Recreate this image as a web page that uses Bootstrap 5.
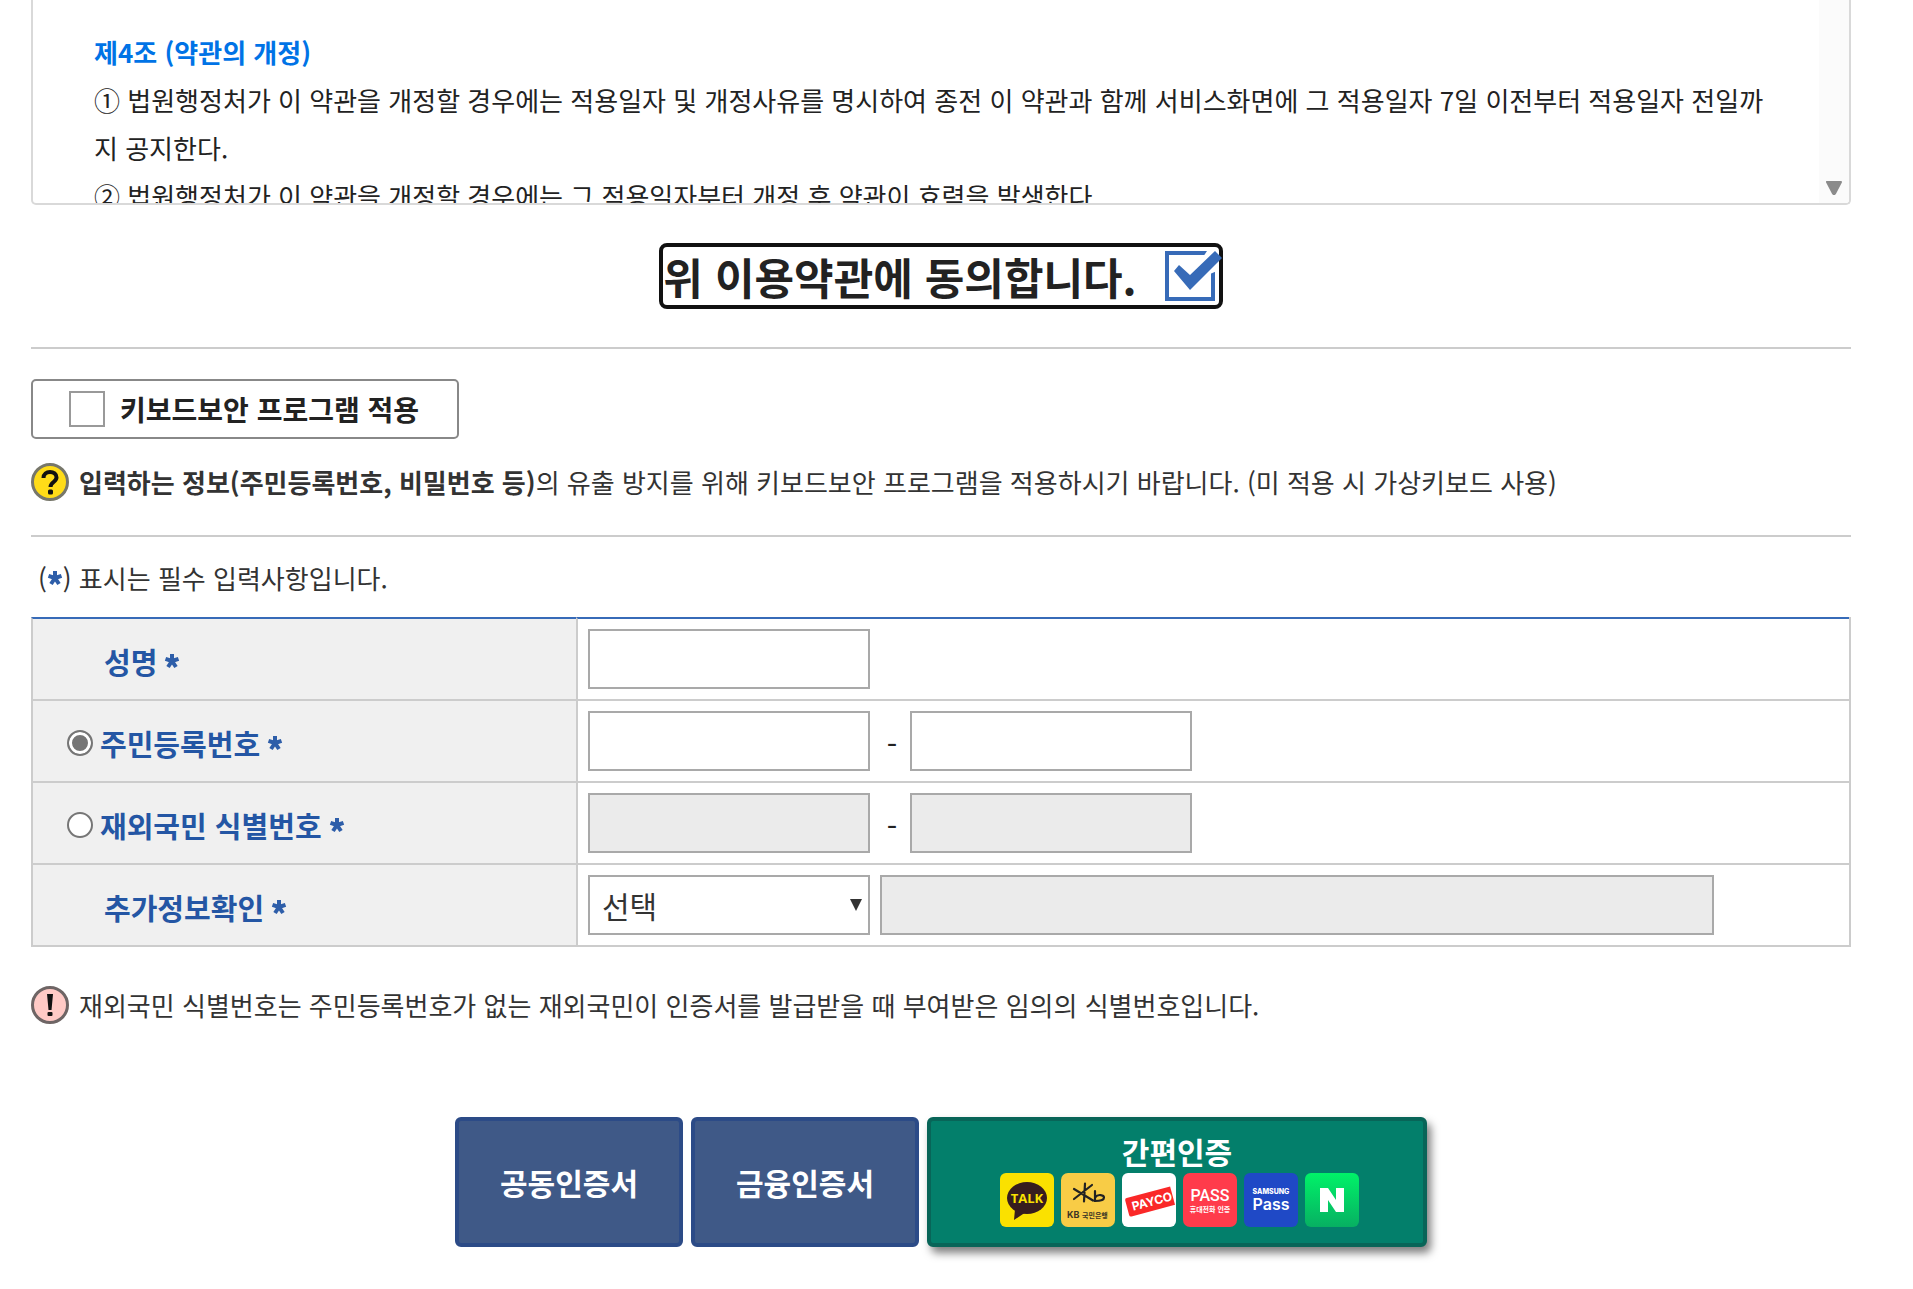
<!DOCTYPE html>
<html lang="ko">
<head>
<meta charset="utf-8">
<meta name="viewport" content="width=device-width, initial-scale=1">
<title>이용약관 동의 및 본인확인</title>
<link href="https://cdn.jsdelivr.net/npm/bootstrap@5.3.0/dist/css/bootstrap.min.css" rel="stylesheet">
<style>
body{font-family:"Noto Sans CJK KR","Noto Sans",sans-serif;font-size:26px;line-height:48px;color:#222;background:#fff}
.page{padding:0 62px 36px 31px}
.terms{height:205px;border:2px solid #d9d9d9;border-top:0;border-radius:0 0 5px 5px;overflow:hidden}
.terms-text{padding:28px 38px 0 61px}
.terms-text h2{font-size:26px;line-height:48px;font-weight:700;color:#0073e6}
.terms-bar{width:30px;background:#fbfbfb;padding-bottom:8px}
.agree{border:4px solid #111;border-radius:8px;height:66px;font-size:43px;gap:28px;margin:38px 0}
.tick{position:relative;width:54px;height:50px}
.tick input{appearance:none;display:block;width:50px;height:50px;margin:0;border:4px solid #376bb8;background:#fff}
.tick svg{position:absolute;left:0;top:0;pointer-events:none}
.rule{border-top:2px solid #ccc}
.keysec{border:2px solid #888;border-radius:5px;height:60px;width:428px;padding-left:36px;gap:15px;font-size:28px;margin:30px 0 19px}
.keysec input{appearance:none;width:36px;height:36px;margin:0;border:2px solid #999;background:#fff}
.hint{gap:10px;color:#333}
.hint svg{flex:none}
.hint + .rule{margin-top:29px}
.required-note{margin:17px 0 15px;padding-left:7px;color:#333}
.star{width:16px;height:16px}
.form-grid{width:100%;border-collapse:separate;border-spacing:0;border-right:2px solid #ccc}
.form-grid th,.form-grid td{height:82px;border-bottom:2px solid #ccc;border-left:2px solid #ccc;vertical-align:middle}
.form-grid tr:first-child>*{border-top:2px solid #376bb8;height:84px}
.form-grid th{width:545px;background:#f0f0f0;color:#2456a4;font-size:29px;font-weight:700;padding:4px 0 0 34px}
.form-grid td{padding:0 10px}
.form-grid th>div{gap:7px}
.no-radio{padding-left:37px}
.form-grid input[type=radio]{appearance:none;flex:none;width:26px;height:26px;margin:0;border:2px solid #767676;border-radius:50%;background:#fff}
.form-grid input[type=radio]:checked{background:#767676;box-shadow:inset 0 0 0 3px #fff}
.field{width:282px;height:60px;border:2px solid #a9a9a9;border-radius:0;background-color:#fff;padding:0 12px;font-size:30px;line-height:normal;color:#333}
.field:disabled{background:#ebebeb;opacity:1}
.field-wide{width:834px;margin-left:10px}
.dash{width:40px;padding:4px 0 0 4px;text-align:center;font-size:30px}
.pick{position:relative}
.pick select{appearance:none}
.pick svg{position:absolute;right:8px;top:24px;pointer-events:none}
.notice{margin:34px 0 88px}
.cert{width:228px;height:130px;border-radius:6px;font-size:30px;font-weight:700;color:#fff}
.cert-blue{background:#3f5987;border:4px solid #2c4b87}
.cert-easy{width:500px;background:#037f6b;border:4px solid #086558;box-shadow:4px 6px 8px rgba(0,0,0,.5)}
.cert-easy .cert-name{line-height:44px}
.logos{gap:7px;padding-left:4px}
</style>
</head>
<body>
<svg width="0" height="0" class="position-absolute" aria-hidden="true">
  <symbol id="star" viewBox="0 0 16 16"><path d="M8 8V1M8 8 1.500 5.800M8 8l6.500-2.200M8 8l-4 6M8 8l4 6" stroke="#2e5ea9" stroke-width="4" fill="none"/></symbol>
</svg>
<main class="page">
  <section class="terms d-flex">
    <div class="terms-text flex-grow-1">
      <h2 class="mb-0">제4조 (약관의 개정)</h2>
      <p class="mb-0">① 법원행정처가 이 약관을 개정할 경우에는 적용일자 및 개정사유를 명시하여 종전 이 약관과 함께 서비스화면에 그 적용일자 7일 이전부터 적용일자 전일까지 공지한다.</p>
      <p class="mb-0">② 법원행정처가 이 약관을 개정할 경우에는 그 적용일자부터 개정 후 약관이 효력을 발생한다.</p>
    </div>
    <div class="terms-bar d-flex align-items-end justify-content-center flex-shrink-0">
      <svg width="18" height="14" viewBox="0 0 18 14"><path d="M2 1h14L10 12.500Q9 14 8 12.500Z" fill="#8b8b8b" stroke="#8b8b8b" stroke-width="2" stroke-linejoin="round"/></svg>
    </div>
  </section>

  <div class="d-flex justify-content-center">
    <label class="agree d-inline-flex align-items-center fw-bold" for="agree">위 이용약관에 동의합니다.
      <span class="tick"><input type="checkbox" id="agree" checked>
        <svg width="58" height="50" viewBox="0 0 58 50"><path d="M42 0h10v20l-7 3-9-14z" fill="#fff"/><path d="M9 20l5-6 11 10L50 0l7 7L25 39Z" fill="#376bb8"/></svg>
      </span>
    </label>
  </div>

  <div class="rule"></div>
  <label class="keysec d-flex align-items-center fw-bold" for="keysec"><input type="checkbox" id="keysec">키보드보안 프로그램 적용</label>
  <div class="hint d-flex align-items-center">
    <svg width="38" height="38" viewBox="0 0 38 38"><circle cx="19" cy="19" r="17.500" fill="#ffdc18" stroke="#77776a" stroke-width="3"/><path d="M12.500 15c0-4 3-6 6.500-6s6.500 2 6.500 5.500c0 4.500-6 4.500-6 9.500" fill="none" stroke="#111" stroke-width="4"/><rect x="17" y="26.500" width="5" height="5" rx="1.500" fill="#111"/></svg>
    <span><b>입력하는 정보(주민등록번호, 비밀번호 등)</b>의 유출 방지를 위해 키보드보안 프로그램을 적용하시기 바랍니다. (미 적용 시 가상키보드 사용)</span>
  </div>
  <div class="rule"></div>

  <div class="required-note d-flex align-items-center">(<svg class="star"><use href="#star"/></svg>)&nbsp;표시는 필수 입력사항입니다.</div>

  <table class="form-grid">
    <tr>
      <th scope="row"><div class="d-flex align-items-center no-radio"><label for="nm">성명</label><svg class="star"><use href="#star"/></svg></div></th>
      <td><input class="field d-block" type="text" id="nm"></td>
    </tr>
    <tr>
      <th scope="row"><div class="d-flex align-items-center"><input type="radio" name="idkind" id="rrn" checked><label for="rrn">주민등록번호</label><svg class="star"><use href="#star"/></svg></div></th>
      <td><div class="d-flex align-items-center"><input class="field" type="text" aria-label="주민등록번호 앞자리"><span class="dash">-</span><input class="field" type="text" aria-label="주민등록번호 뒷자리"></div></td>
    </tr>
    <tr>
      <th scope="row"><div class="d-flex align-items-center"><input type="radio" name="idkind" id="orn"><label for="orn">재외국민 식별번호</label><svg class="star"><use href="#star"/></svg></div></th>
      <td><div class="d-flex align-items-center"><input class="field" type="text" disabled aria-label="식별번호 앞자리"><span class="dash">-</span><input class="field" type="text" disabled aria-label="식별번호 뒷자리"></div></td>
    </tr>
    <tr>
      <th scope="row"><div class="d-flex align-items-center no-radio"><label for="extra">추가정보확인</label><svg class="star"><use href="#star"/></svg></div></th>
      <td><div class="d-flex align-items-center"><span class="pick d-inline-flex"><select class="field" id="extra"><option>선택</option></select><svg width="12" height="12" viewBox="0 0 12 12"><path d="M0 0h12L6 12z" fill="#333"/></svg></span><input class="field field-wide" type="text" disabled aria-label="추가정보"></div></td>
    </tr>
  </table>

  <div class="hint notice d-flex align-items-center">
    <svg width="38" height="38" viewBox="0 0 38 38"><circle cx="19" cy="19" r="17.500" fill="#ffcac6" stroke="#6e6565" stroke-width="3"/><path d="M16 8h6l-1.500 16h-3z" fill="#111"/><rect x="16.500" y="26" width="5" height="4" rx="1" fill="#111"/></svg>
    <span>재외국민 식별번호는 주민등록번호가 없는 재외국민이 인증서를 발급받을 때 부여받은 임의의 식별번호입니다.</span>
  </div>

  <div class="d-flex justify-content-center gap-2">
    <button type="button" class="cert cert-blue">공동인증서</button>
    <button type="button" class="cert cert-blue">금융인증서</button>
    <button type="button" class="cert cert-easy d-flex flex-column align-items-center p-0 pt-2">
      <span class="cert-name">간편인증</span>
      <span class="logos d-flex">
        <svg width="54" height="54" viewBox="0 0 54 54"><rect width="54" height="54" rx="6" fill="#fae100"/><ellipse cx="27" cy="25" rx="20" ry="16" fill="#371d1e"/><path d="M15 36l-1 11 12-8z" fill="#371d1e"/><text x="27" y="30" text-anchor="middle" font-family="Open Sans" font-weight="700" font-size="13" fill="#fae100">TALK</text></svg>
        <svg width="54" height="54" viewBox="0 0 54 54"><rect width="54" height="54" rx="7" fill="#f8cc46"/><path d="M24 10.500l-1 18M13 16l19 11.500M31 12L13 26M34 18v10c6 0 9-1 9-3.500s-6-4-9 0" fill="none" stroke="#222" stroke-width="2.200" stroke-linecap="round"/><text x="6" y="45" font-family="Inter" font-size="9" fill="#3c3425">KB</text><text x="21" y="45" font-family="Noto Sans CJK KR" font-weight="700" font-size="7" fill="#3c3425">국민은행</text></svg>
        <svg width="54" height="54" viewBox="0 0 54 54"><rect width="54" height="54" rx="6" fill="#fff"/><g transform="rotate(-15 6 34)"><path d="M5 27q0-2 2-2h45v19H7q-2 0-2-2z" fill="#fa2828"/><text x="10" y="39" font-family="Inter" font-weight="700" font-size="12" fill="#fff">PAYCO</text></g><path d="M54 0v54" stroke="#037f6b" stroke-width="0"/></svg>
        <svg width="54" height="54" viewBox="0 0 54 54"><rect width="54" height="54" rx="7" fill="#ff3b4b"/><text x="27" y="28" text-anchor="middle" font-family="Roboto" font-weight="500" font-size="16" fill="#fff">PASS</text><text x="27" y="39" text-anchor="middle" font-family="Noto Sans CJK KR" font-size="7" fill="#fff">휴대전화 인증</text></svg>
        <svg width="54" height="54" viewBox="0 0 54 54"><rect width="54" height="54" rx="6" fill="#1f49c6"/><text x="27" y="21" text-anchor="middle" font-family="Inter" font-weight="800" font-size="7" fill="#fff">SAMSUNG</text><text x="27" y="37" text-anchor="middle" font-family="Inter" font-weight="600" font-size="16" fill="#fff">Pass</text></svg>
        <svg width="54" height="54" viewBox="0 0 54 54"><defs><linearGradient id="ng" x2="0" y2="1"><stop stop-color="#00f268"/><stop offset="1" stop-color="#07b062"/></linearGradient></defs><rect width="54" height="54" rx="6" fill="url(#ng)"/><path d="M15 15h8l8 12V15h8v24h-8l-8-12v12h-8z" fill="#fff"/></svg>
      </span>
    </button>
  </div>
</main>
<script src="https://cdn.jsdelivr.net/npm/bootstrap@5.3.0/dist/js/bootstrap.bundle.min.js"></script>
</body>
</html>
